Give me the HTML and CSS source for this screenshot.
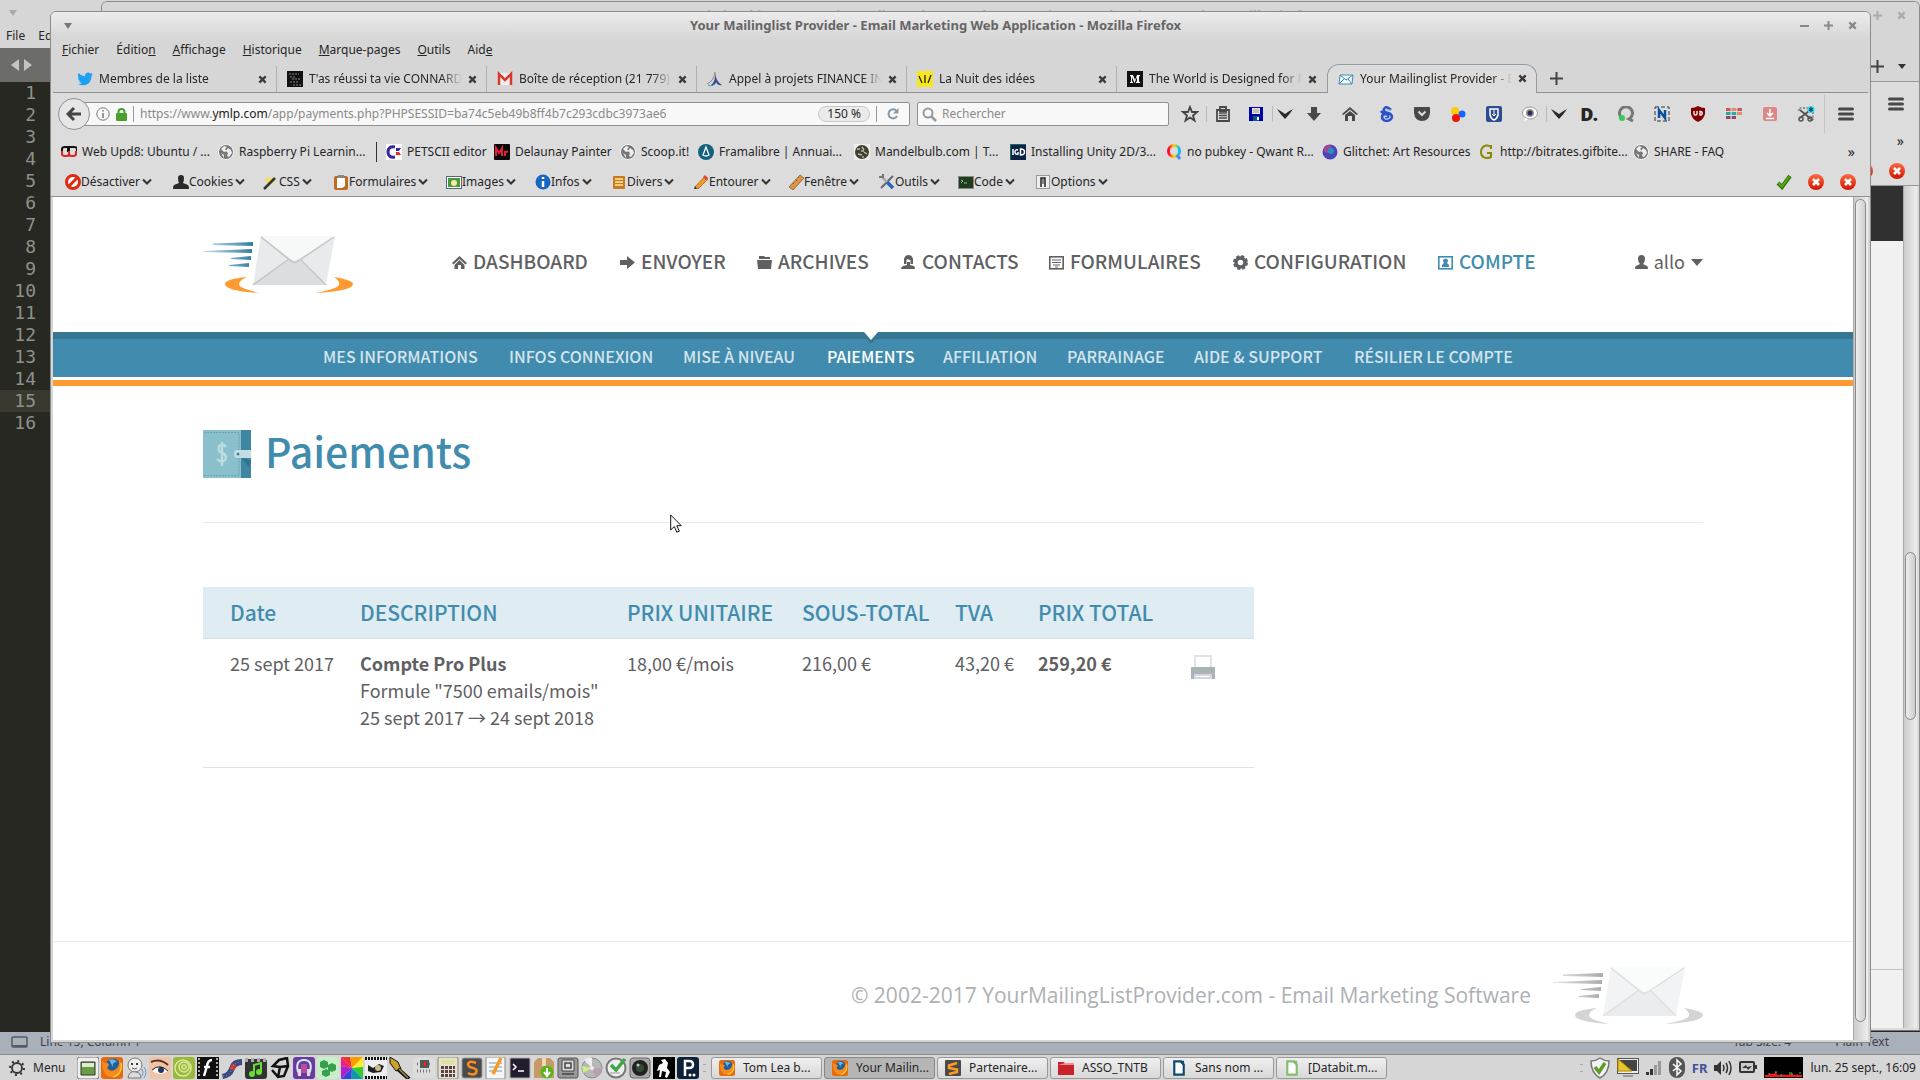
FILE: index.html
```html
<!DOCTYPE html>
<html lang="fr">
<head>
<meta charset="utf-8">
<title>Your Mailinglist Provider - Email Marketing Web Application</title>
<link rel="stylesheet" href="styles.css">
</head>
<body>
<svg class="defs" aria-hidden="true">
  <defs>
    <linearGradient id="fadeBlue"><stop offset="0" stop-color="#418cae" stop-opacity=".3"/><stop offset="1" stop-color="#337c9f"/></linearGradient>
    <linearGradient id="fadeGray"><stop offset="0" stop-color="#aaa" stop-opacity=".3"/><stop offset="1" stop-color="#aaa"/></linearGradient>
    <linearGradient id="redBall" x2="0" y2="1"><stop offset="0" stop-color="#ff6a45"/><stop offset="1" stop-color="#cf1500"/></linearGradient>
    <linearGradient id="wheel"><stop offset="0" stop-color="#f03"/><stop offset=".5" stop-color="#fd0"/><stop offset="1" stop-color="#0bf"/></linearGradient>
  </defs>
  <symbol id="x" viewBox="0 0 10 10"><path d="M1.500 1.500l7 7M8.500 1.500l-7 7" stroke="currentColor" stroke-width="2.600" fill="none"/></symbol>
  <symbol id="chev" viewBox="0 0 10 8"><path d="M1 1.500l4 4 4-4" stroke="#333" stroke-width="2" fill="none"/></symbol>
  <symbol id="bigchev" viewBox="0 0 18 12"><path d="M1 1q4 2 8 5 4-3 8-5-3 5-8 10Q4 6 1 1z" fill="#2b2b2b"/></symbol>
  <symbol id="globe" viewBox="0 0 16 16"><circle cx="8" cy="8" r="7.500" fill="#777" stroke="#f5f5f5"/><path d="M3 5l3-3 3 1-2 2 2 2-3 1zM10 4l3 2 1 3-3 4-2-1 1-3-2-2zM3 9l3 2v3z" fill="#eee"/></symbol>
  <symbol id="stop" viewBox="0 0 16 16"><circle cx="8" cy="8" r="8" fill="url(#redBall)"/><path d="M5 5l6 6M11 5l-6 6" stroke="#fff" stroke-width="2.600"/></symbol>
  <symbol id="fox" viewBox="0 0 22 22"><rect width="22" height="22" rx="3" fill="#e86a10"/><circle cx="12" cy="9" r="7.500" fill="#245c9c"/><path d="M8 3q5-2 8 2-5 0-4 5z" fill="#60b8e8"/><path d="M1 3q1 3 3 3 3-1 4 2l-2 3q4 5 9 1 4-3 3-9 4 4 2 10-3 7-10 7Q1 19 1 3z" fill="#f58b1c"/><path d="M20 6q2 11-8 14" stroke="#fc3" stroke-width="1.500" fill="none"/></symbol>
  <symbol id="burger" viewBox="0 0 16 14"><path d="M1.500 2h13M1.500 7h13M1.500 12h13" stroke="#484848" stroke-width="3" stroke-linecap="round"/></symbol>
  <symbol id="doc" viewBox="0 0 16 22"><path d="M1.500 2h9l4 4v14h-13z" fill="#fff" stroke="currentColor" stroke-width="3"/><path d="M8 1h7v8z" fill="currentColor"/></symbol>
  <symbol id="mail" viewBox="0 0 150 58">
    <path d="M58 1H132L123 50H50z" fill="#e9eaec"/><path d="M58 1H132L92 27z" fill="#f7f8f8"/><path d="M50 50L88 24Q91 28 95 24L123 50z" fill="#dcdddf"/>
    <path d="M58 2l30 24q3 3 7 0l36-24M50 50l36-26M123 50L97 24" stroke="#c4c5c7" stroke-width="1.500" fill="none"/>
  </symbol>
  <symbol id="arcs" viewBox="0 0 150 58"><path d="M44 42Q22 44 22 49q0 7 35 9-19-4-21-8 0-5 8-8zM131 42q19 3 19 7 0 7-38 9 22-4 24-8 1-4-5-8z"/></symbol>
</svg>

<div class="desktop">
  <section class="editor" aria-label="Sublime Text">
    <header class="editor-title"><svg width="10" height="7"><path d="M1 1h8L5 7z" fill="#aaa"/></svg></header>
    <nav class="editor-menu"><span>File</span><span>Edit</span></nav>
    <div class="editor-tabs"><svg width="21" height="12"><path d="M8 0v12L0 6zM13 0v12l8-6z" fill="#c4c4c4"/></svg></div>
    <ol class="gutter"><li>1</li><li>2</li><li>3</li><li>4</li><li>5</li><li>6</li><li>7</li><li>8</li><li>9</li><li>10</li><li>11</li><li>12</li><li>13</li><li>14</li><li class="current">15</li><li>16</li></ol>
    <footer class="editor-status"><svg width="17" height="12"><rect x="1" y="1" width="15" height="10" rx="1" fill="none" stroke="#555b66" stroke-width="1.500"/><path d="M1 9h15v2H1z" fill="#555b66"/></svg><span>Line 15, Column 1</span><span class="tabsize">Tab Size: 4</span><span>Plain Text</span></footer>
  </section>

  <section class="window back" aria-label="Mozilla Firefox">
    <header class="back-title"><svg width="10" height="7"><path d="M1 1h8L5 7z" fill="#aaa"/></svg><h2>Tom Lea b2b Tobi Actress Radar Radio, 19th September 2017 - by Annual Active Records - Mozilla Firefox</h2><span class="back-controls"><svg width="9" height="9"><path d="M0 4.500h9M4.500 0v9" stroke="#aaa" stroke-width="2"/></svg><svg width="9" height="9" color="#aaa"><use href="#x"/></svg></span></header>
    <div class="back-side">
      <div class="back-tabs"><svg width="13" height="13"><path d="M0 6.500h13M6.500 0v13" stroke="#444" stroke-width="2"/></svg><svg width="8" height="5"><path d="M0 0h8L4 5z" fill="#333"/></svg></div>
      <div class="back-tools"><svg width="16" height="14"><use href="#burger"/></svg></div>
      <div class="back-marks">»</div>
      <div class="back-dev"><svg width="16" height="16"><use href="#stop"/></svg><svg width="16" height="16"><use href="#stop"/></svg></div>
      <div class="back-page"><div class="back-content"><div class="dark"></div><div class="foot"></div></div><div class="back-scroll"><i></i></div></div>
    </div>
  </section>

  <section class="window front" aria-label="Your Mailinglist Provider">
    <header class="title"><svg width="10" height="7"><path d="M1 1h8L5 7z" fill="#777"/></svg><h1>Your Mailinglist Provider - Email Marketing Web Application - Mozilla Firefox</h1>
      <span class="controls"><button aria-label="Réduire"><svg width="9" height="9"><path d="M0 5h9" stroke="#888" stroke-width="2"/></svg></button><button aria-label="Agrandir"><svg width="9" height="9"><path d="M0 4.500h9M4.500 0v9" stroke="#888" stroke-width="2"/></svg></button><button aria-label="Fermer"><svg width="9" height="9" color="#888"><use href="#x"/></svg></button></span></header>
    <nav class="menubar"><a href="#"><u>F</u>ichier</a><a href="#">Éditio<u>n</u></a><a href="#"><u>A</u>ffichage</a><a href="#"><u>H</u>istorique</a><a href="#"><u>M</u>arque-pages</a><a href="#"><u>O</u>utils</a><a href="#">Aid<u>e</u></a></nav>

    <div class="tabs">
      <div class="tab"><svg width="16" height="16" viewBox="0 0 16 16"><path d="M1 13q3 0 4-1-2 0-3-2h1Q1 9 1 6.500l1 .4Q0 5 1.500 2 4 5 8 5.500 7.500 2 11 1.500q1.500 0 2.500 1l1.800-.7-1 1.700 1.700-.3-1.500 1.800Q14.500 12 8.500 14 4.500 15 1 13z" fill="#1da1f2"/></svg><span>Membres de la liste</span><button aria-label="Fermer l'onglet"><svg width="9" height="9"><use href="#x"/></svg></button></div>
      <div class="tab"><svg width="16" height="16"><rect width="16" height="16" fill="#111"/><path d="M2 3h10M3 6h6M5 8h8M3 11h9M6 14h8" stroke="#888" stroke-dasharray="2 1"/></svg><span>T'as réussi ta vie CONNARD - Page</span><button aria-label="Fermer l'onglet"><svg width="9" height="9"><use href="#x"/></svg></button></div>
      <div class="tab"><svg width="16" height="16"><rect x="1" y="2" width="14" height="12" fill="#eee"/><path d="M2 14V3l6 6 6-6v11" stroke="#d8392b" stroke-width="2.500" fill="none"/></svg><span>Boîte de réception (21 779) - all</span><button aria-label="Fermer l'onglet"><svg width="9" height="9"><use href="#x"/></svg></button></div>
      <div class="tab"><svg width="16" height="16"><path d="M8 1q-1 9-8 12" stroke="#888" fill="none"/><path d="M8 1q1 10 7 13-4 1-6-3-1 4-5 3Q9 10 8 1z" fill="#3d4890"/><path d="M1 14q5 2 6-1" stroke="#2ab" fill="none"/></svg><span>Appel à projets FINANCE INNOV</span><button aria-label="Fermer l'onglet"><svg width="9" height="9"><use href="#x"/></svg></button></div>
      <div class="tab"><svg width="16" height="16"><rect width="16" height="16" fill="#f8e71c"/><path d="M2 5l3 7M8 4v8M14 4l-3 8" stroke="#222" stroke-width="1.300"/></svg><span>La Nuit des idées</span><button aria-label="Fermer l'onglet"><svg width="9" height="9"><use href="#x"/></svg></button></div>
      <div class="tab last"><svg width="16" height="16"><rect width="16" height="16" fill="#111"/><path d="M3 4h3l2 5 2-5h3v1l-1 .5v5l1 .5v1H9v-1l1-.5V6L7.500 12 5 6v4.500l1 .5v1H3v-1l1-.5v-5L3 5z" fill="#fff"/></svg><span>The World is Designed for Men</span><button aria-label="Fermer l'onglet"><svg width="9" height="9"><use href="#x"/></svg></button></div>
      <div class="tab active"><svg width="16" height="16"><path d="M2 4h13l-1 9H1z" fill="#eef6fa" stroke="#418cae"/><path d="M2 4l6 5 7-5M1 13l5-5M14 13L10 8" stroke="#418cae" fill="none"/></svg><span>Your Mailinglist Provider - Email</span><button aria-label="Fermer l'onglet"><svg width="9" height="9"><use href="#x"/></svg></button></div>
      <button class="newtab" aria-label="Nouvel onglet"><svg width="13" height="13"><path d="M0 6.500h13M6.500 0v13" stroke="#444" stroke-width="2"/></svg></button>
    </div>

    <div class="toolbar">
      <button class="backbtn" aria-label="Retour"><svg width="16" height="16"><path d="M8 2L2 8l6 6M2.500 8H15" stroke="#444" stroke-width="3" fill="none"/></svg></button>
      <div class="url"><svg width="14" height="14"><circle cx="7" cy="7" r="6.200" fill="none" stroke="#777"/><path d="M7 3v1.500M7 6v5" stroke="#777" stroke-width="1.500"/></svg><svg width="11" height="13"><rect y="5" width="11" height="8" rx="1" fill="#499f2a"/><path d="M2.500 6V4a3 3 0 016 0v2" stroke="#499f2a" stroke-width="2" fill="none"/></svg><i class="bar"></i><div class="address" role="textbox" aria-label="Adresse" contenteditable="true" spellcheck="false">https://www.<b>ymlp.com</b>/app/payments.php?PHPSESSID=ba74c5eb49b8ff4b7c293cdbc3973ae6</div><button class="zoom">150 %</button><i class="bar"></i><button class="reload" aria-label="Actualiser"><svg width="12" height="12"><path d="M10 8a4.500 4.500 0 11-.5-5" stroke="#8a98a5" stroke-width="2" fill="none"/><path d="M11.500 0v5.500H6z" fill="#8a98a5"/></svg></button></div>
      <label class="search"><svg width="15" height="15"><circle cx="6" cy="6" r="4.500" fill="none" stroke="#999" stroke-width="2"/><path d="M9 9l5 5" stroke="#999" stroke-width="2.500"/></svg><input type="search" placeholder="Rechercher" aria-label="Rechercher"></label>
      <div class="tools">
        <button aria-label="Marquer"><svg width="18" height="18"><path d="M9 2l2 5h5l-4 3.500 1.500 5L9 12.500l-4.500 3 1.500-5L2 7h5z" fill="none" stroke="#444" stroke-width="1.800"/></svg></button>
        <button class="ruled" aria-label="Marque-pages"><svg width="16" height="16"><path d="M2 4h12v11H2zM5 1h6v4H5z" fill="none" stroke="#484848" stroke-width="1.800"/><path d="M4 7h8M4 9.500h8M4 12h8" stroke="#484848" stroke-width="1.300"/></svg></button>
        <button aria-label="Enregistrer"><svg width="14" height="14"><path d="M0 0h14v14H0z" fill="#0000a8"/><path d="M3 1h8v6H3z" fill="#e6e6e6"/><path d="M4 3h6M4 5h6" stroke="#999"/><path d="M4 9h6v5H4z" fill="#085a85"/><path d="M8 10h2v3H8z" fill="#fff"/></svg></button>
        <button class="ruled slim" aria-label="Plus"><svg width="18" height="12"><use href="#bigchev"/></svg></button>
        <button aria-label="Téléchargements"><svg width="16" height="16"><path d="M5 1h6v6h4l-7 8-7-8h4z" fill="#484848"/></svg></button>
        <button aria-label="Accueil"><svg width="16" height="16"><path d="M0 8l8-7 8 7-1.500 1L8 3.500 1.500 9z" fill="#484848"/><path d="M3 9l5-4 5 4v6h-3v-5H6v5H3z" fill="#484848"/></svg></button>
        <button aria-label="Extension"><svg width="16" height="16"><path d="M13 4Q8-1 6 3q-1 3 4 4M3 5q2 3 7 2 4 1 4 4-1 4-6 4-4-1-4-4t4-3q3 1 2 3-2 1-2 0" stroke="#2e50c8" stroke-width="2.500" fill="none"/><path d="M7 3q3 2 6 1M6 12q2 2 5 0" stroke="#8ac4f0" fill="none"/></svg></button>
        <button aria-label="Pocket"><svg width="16" height="16"><path d="M1 1h14q1 0 1 1v5q-1 8-8 8T0 7V2q0-1 1-1z" fill="#484848"/><path d="M4.500 5.500L8 9l3.500-3.500" stroke="#ddd" stroke-width="2" fill="none"/></svg></button>
        <button aria-label="Extension"><svg width="16" height="16"><circle cx="5" cy="5" r="4" fill="#fc0"/><circle cx="12" cy="8" r="3.500" fill="#16f"/><circle cx="6" cy="12" r="4" fill="#f21505"/></svg></button>
        <button aria-label="Extension"><svg width="16" height="16"><rect width="16" height="16" rx="2" fill="#2c4e91"/><path d="M4 3h8v6q-1 4-4 5-3-1-4-5z" fill="none" stroke="#fff" stroke-width="1.500"/><path d="M8 4v6M6 8l2 2 2-2" stroke="#fff" fill="none"/></svg></button>
        <button aria-label="Extension"><svg width="16" height="16"><ellipse cx="8" cy="7" rx="7.500" ry="6" fill="#fff" stroke="#999"/><path d="M3 12l-1 3 5-2z" fill="#fff"/><circle cx="8" cy="7" r="4" fill="#a79090"/><circle cx="8" cy="7" r="2.500" fill="#223366"/></svg></button>
        <button class="ruled slim" aria-label="Plus"><svg width="18" height="12"><use href="#bigchev"/></svg></button>
        <button class="dee" aria-label="Extension">D.</button>
        <button aria-label="Extension"><svg width="16" height="16"><path d="M5 13a6.500 6.500 0 116 0l4 2" fill="none" stroke="#777" stroke-width="3"/><circle cx="4" cy="12" r="3" fill="#3c5"/></svg></button>
        <button aria-label="Extension"><svg width="16" height="16"><rect x="1" y="1" width="14" height="14" fill="none" stroke="#333" stroke-dasharray="4 2"/><path d="M5 12V4l6 8V4" stroke="#0a4fa0" stroke-width="2.500" fill="none"/></svg></button>
        <button aria-label="uBlock"><svg width="16" height="16"><path d="M8 0q3 2 7 2v6q-1 5-7 8-6-3-7-8V2q4 0 7-2z" fill="#800000"/><path d="M4 5v3q0 1 1.500 1T7 8V5M10 5.500a1.800 1.800 0 110 3.500z" stroke="#fff" stroke-width="1.300" fill="none"/></svg></button>
        <button aria-label="Extension"><svg width="16" height="12"><path d="M0 1.500h16" stroke="#c55" stroke-width="3" stroke-dasharray="4.500 1.200"/><path d="M0 5.500h16" stroke="#2aa9a0" stroke-width="3" stroke-dasharray="4.500 1.200"/><path d="M0 9.500h10" stroke="#946" stroke-width="3" stroke-dasharray="4.500 1.200"/><path d="M11.500 5.500H16M6 1.500h4" stroke="#e58a63" stroke-width="3"/></svg></button>
        <button aria-label="Extension"><svg width="14" height="14"><rect width="14" height="14" rx="2" fill="#d88"/><path d="M7 2v6M4 6l3 3 3-3M3 11.500h8" stroke="#fff" stroke-width="1.500" fill="none"/></svg></button>
        <button aria-label="Capture"><svg width="17" height="16"><path d="M1 5V2h14v12h-3" stroke="#444" stroke-dasharray="2 1.500" fill="none"/><path d="M2 4l11 9M2 12l9-7" stroke="#555" stroke-width="1.800"/><circle cx="3" cy="13" r="2" fill="none" stroke="#555" stroke-width="1.500"/><circle cx="12" cy="13" r="2" fill="none" stroke="#555" stroke-width="1.500"/><circle cx="13" cy="3.500" r="3.500" fill="#1de0f0"/><path d="M13 1v5M11 2.500l4 2M15 2.500l-4 2" stroke="#124"/></svg></button>
      </div>
      <button class="menu" aria-label="Menu"><svg width="16" height="14"><use href="#burger"/></svg></button>
    </div>

    <nav class="bookmarks">
      <a href="#"><svg width="16" height="16"><path d="M1 8V5q0-2 3-2h3v5M8 8V3h5q3 0 3 2v3" stroke="#111" stroke-width="2" fill="none"/><path d="M1 7v3q0 2 3 2h1q3 0 3-2V7v3q0 2 3 2h1q3 0 3-2V7" stroke="#d22" stroke-width="2" fill="none"/></svg>Web Upd8: Ubuntu / ...</a>
      <a href="#"><svg width="16" height="16"><use href="#globe"/></svg>Raspberry Pi Learnin...</a>
      <a href="#" class="ruled"><svg width="16" height="16"><rect width="16" height="16" fill="#fff"/><path d="M9 3Q2 2 2 8t7 5" stroke="#3524a8" stroke-width="3" fill="none"/><path d="M10 4h5l-2 3h-3z" fill="#3524a8"/><path d="M10 8h3l2 3h-5z" fill="#e22"/></svg>PETSCII editor</a>
      <a href="#"><svg width="16" height="16"><rect width="16" height="16" rx="1" fill="#080808"/><path d="M2 12V4l3 5 3-5v8M11 12V7M11 9q1-2 3-1" stroke="#e0203c" stroke-width="2" fill="none"/></svg>Delaunay Painter</a>
      <a href="#"><svg width="16" height="16"><use href="#globe"/></svg>Scoop.it!</a>
      <a href="#"><svg width="16" height="16"><circle cx="8" cy="8" r="8" fill="#13607f"/><path d="M8 3l-3 8q3 2 6 0z" fill="none" stroke="#fff" stroke-width="1.300"/></svg>Framalibre | Annuai...</a>
      <a href="#"><svg width="16" height="16"><rect width="16" height="16" fill="#eee"/><circle cx="8" cy="8" r="7" fill="#443f33"/><path d="M3 5h3M8 3l2 3M4 10l4 1M10 8l3 2M7 7h3M8 13h2" stroke="#bba" stroke-width="1.500"/></svg>Mandelbulb.com | T...</a>
      <a href="#"><svg width="16" height="16"><rect width="16" height="16" fill="#0c2348"/><path d="M0 0h16M0 0v16" stroke="#2a8"/><path d="M3 5v6M8 6q-3-1-3 2t3 2V8M10.500 5v6q4 0 4-3t-4-3z" stroke="#fff" stroke-width="1.500" fill="none"/></svg>Installing Unity 2D/3...</a>
      <a href="#"><svg width="16" height="16"><circle cx="8" cy="7" r="5.500" stroke="url(#wheel)" stroke-width="3" fill="none"/><path d="M11 11l3 4" stroke="#58e" stroke-width="3"/></svg>no pubkey - Qwant R...</a>
      <a href="#"><svg width="16" height="16"><circle cx="8" cy="8" r="7.500" fill="#4a45b8"/><circle cx="6" cy="5" r="4" fill="#a04898"/><circle cx="9" cy="7" r="3" fill="#2790c0"/></svg>Glitchet: Art Resources</a>
      <a href="#"><svg width="16" height="16"><path d="M12 3Q10 1 7 1.500 2 3 2 8t5 6q4 0 5-1V9H8M12 1v4" stroke="#8a8a00" stroke-width="2" fill="none"/></svg>http://bitrates.gifbite...</a>
      <a href="#"><svg width="16" height="16"><use href="#globe"/></svg>SHARE - FAQ</a>
      <button class="more" aria-label="Plus de marque-pages">»</button>
    </nav>

    <div class="devbar">
      <button><svg width="16" height="16"><circle cx="8" cy="8" r="6.500" fill="#fff" stroke="#dc2b12" stroke-width="3"/><path d="M4 12l8-8" stroke="#dc2b12" stroke-width="3"/></svg>Désactiver<svg class="c" width="10" height="8"><use href="#chev"/></svg></button>
      <button><svg width="16" height="16"><path d="M5 4q0-3 3-3t3 3-1 5l5 2q1 1 1 4H0q0-3 1-4l5-2Q5 7 5 4z" fill="#2a2a2a"/></svg>Cookies<svg class="c" width="10" height="8"><use href="#chev"/></svg></button>
      <button><svg width="16" height="16"><path d="M5 1l2 4 4-2-2 4 3 3H7l-3 3V8L1 5h4z" fill="#fd3" fill-opacity=".8"/><path d="M1 15L12 4" stroke="#333" stroke-width="2.500"/></svg>CSS<svg class="c" width="10" height="8"><use href="#chev"/></svg></button>
      <button><svg width="16" height="16"><rect x="1" y="2" width="14" height="14" rx="2" fill="#c06a26"/><path d="M4 4h8v8l-3 2H4z" fill="#fff"/><path d="M5 1h6v3H5z" fill="#888"/></svg>Formulaires<svg class="c" width="10" height="8"><use href="#chev"/></svg></button>
      <button><svg width="16" height="16"><rect x=".5" y="2.500" width="15" height="12" fill="#fff" stroke="#567"/><path d="M2 4h12v9H2z" fill="#4a9a3c"/><circle cx="8" cy="9" r="3" fill="#f5e9b0"/></svg>Images<svg class="c" width="10" height="8"><use href="#chev"/></svg></button>
      <button><svg width="16" height="16"><circle cx="8" cy="8" r="7.500" fill="#1767c0"/><path d="M8 3v2M8 7v6" stroke="#fff" stroke-width="2.500"/></svg>Infos<svg class="c" width="10" height="8"><use href="#chev"/></svg></button>
      <button><svg width="16" height="16"><rect x="2" y="2" width="12" height="13" rx="1" fill="#c77a22"/><path d="M4 5h8M4 8h8M4 11h8" stroke="#f6cf7a" stroke-width="1.800"/></svg>Divers<svg class="c" width="10" height="8"><use href="#chev"/></svg></button>
      <button><svg width="16" height="16"><path d="M2 13L12 2l3 3L5 15z" fill="#f39a2b" stroke="#9a5410" stroke-width=".7"/><path d="M12 1l3 3-2 2-3-3z" fill="#d44"/><path d="M1 15l1-3 2 3z" fill="#333"/></svg>Entourer<svg class="c" width="10" height="8"><use href="#chev"/></svg></button>
      <button><svg width="16" height="16"><path d="M1 13L12 1l4 3L5 16z" fill="#d8954e" stroke="#8f5b21" stroke-width=".8"/><path d="M5 9l1 1M8 6l1 1M10 3l1 1" stroke="#8f5b21"/></svg>Fenêtre<svg class="c" width="10" height="8"><use href="#chev"/></svg></button>
      <button><svg width="16" height="16"><path d="M2 14L14 2" stroke="#667" stroke-width="2"/><path d="M2 2l7 7" stroke="#aaa" stroke-width="2.500"/><path d="M8 8l6 6" stroke="#2464c0" stroke-width="3.500"/><path d="M0 3h4V0" stroke="#777" stroke-width="2" fill="none"/></svg>Outils<svg class="c" width="10" height="8"><use href="#chev"/></svg></button>
      <button><svg width="16" height="16"><rect x=".5" y="2.500" width="15" height="12" fill="#223a20" stroke="#888"/><path d="M3 6l2 1-2 2M6 9h3" stroke="#7d7" fill="none"/></svg>Code<svg class="c" width="10" height="8"><use href="#chev"/></svg></button>
      <button><svg width="16" height="16"><rect x="1.500" y="1.500" width="13" height="13" fill="#eee" stroke="#999"/><path d="M6 13V4h4v9" stroke="#222" stroke-width="1.500" fill="none"/><path d="M7.500 5h1v5h-1z" fill="#222"/></svg>Options<svg class="c" width="10" height="8"><use href="#chev"/></svg></button>
      <span class="state"><svg width="16" height="16"><path d="M2 9l4 4 8-11" stroke="#2f6f08" stroke-width="4" fill="none"/><path d="M2.500 9L6 12.500 13.500 2.500" stroke="#5cab12" stroke-width="2" fill="none"/></svg><svg width="16" height="16"><use href="#stop"/></svg><svg width="16" height="16"><use href="#stop"/></svg></span>
    </div>

    <div class="viewport">
      <div class="page">
        <header class="site-head">
          <a href="#" class="logo" aria-label="YMLP"><svg width="150" height="58"><g fill="url(#fadeBlue)"><path d="M10 8.500L50 7v4l-40-1zM0 16l49-2v4l-49-1zM28 23l20-2v4l-20-1zM26 30l20-2v4l-20-1z"/></g><use href="#arcs" fill="#ff9a33"/><use href="#mail"/></svg></a>
          <nav class="mainnav">
            <a href="#"><svg width="15" height="15"><path d="M0 8l7.500-7L15 8l-1.500 1.500-6-5.500-6 5.500z"/><path d="M2.500 10l5-5 5 5v4H9v-4H6v4H2.500z"/></svg>DASHBOARD</a>
            <a href="#"><svg width="15" height="15"><path d="M0 5h7V1l8 6.500L7 14v-4H0z"/></svg>ENVOYER</a>
            <a href="#"><svg width="15" height="15"><path d="M2 4V1h5l1 1h5v2zM0 5h15l-1 9H1z"/></svg>ARCHIVES</a>
            <a href="#"><svg width="15" height="15"><path d="M3 9V4q1-4 4.500-4T12 4v5H9.500V5q-2 0-3-1l-1 1v4zM6 7h3v3l4 1q1 1 1 3H0q0-2 2-3l4-1z"/></svg>CONTACTS</a>
            <a href="#"><svg width="15" height="15"><rect x=".8" y="1.800" width="13.400" height="12" fill="none" stroke="currentColor" stroke-width="1.600"/><path d="M3 5h9M3 7.500h9M4 10h7M6 12h3" stroke="currentColor"/></svg>FORMULAIRES</a>
            <a href="#"><svg width="15" height="15"><circle cx="7.500" cy="7.500" r="4.500" fill="none" stroke="currentColor" stroke-width="3.500"/><circle cx="7.500" cy="7.500" r="6.500" fill="none" stroke="currentColor" stroke-width="2" stroke-dasharray="3.100 2"/></svg>CONFIGURATION</a>
            <a href="#" class="on"><svg width="15" height="15"><rect x=".8" y="1.800" width="13.400" height="12" fill="none" stroke="currentColor" stroke-width="1.600"/><path d="M5 5q2.500-3 5 0 0 2-1 3l2 2v2H4v-2l2-2q-1-1-1-3z"/></svg>COMPTE</a>
          </nav>
          <button class="user"><svg width="13" height="15"><path d="M3 4q0-4 3.500-4T10 4q0 3-2 5l4 2q1 0 1 3H0q0-3 1-3l4-2Q3 7 3 4z"/></svg>allo<svg width="12" height="7"><path d="M0 0h12L6 7z"/></svg></button>
        </header>
        <nav class="subnav"><a href="#">MES INFORMATIONS</a><a href="#">INFOS CONNEXION</a><a href="#">MISE À NIVEAU</a><a href="#" class="on">PAIEMENTS</a><a href="#">AFFILIATION</a><a href="#">PARRAINAGE</a><a href="#">AIDE &amp; SUPPORT</a><a href="#">RÉSILIER LE COMPTE</a></nav>
        <div class="rule"></div>
        <main>
          <div class="heading"><svg width="48" height="48"><rect width="48" height="48" fill="#8abfcc"/><path d="M38 0h10v48H38z" fill="#3e86a1"/><path d="M1 2.500h35v43H1" stroke="#6aa2b2" stroke-dasharray="2 1" fill="none"/><path d="M23 17q-3-4-7-1-2 5 3 7 6 2 3 7-4 3-8-1M19 12v24" stroke="#bddde2" stroke-width="2.400" fill="none"/><path d="M48 31l-10-4 8 10z" fill="#2d7490"/><path d="M34 20h14v8H34q-3 0-3-4t3-4z" fill="#c2dee3"/><circle cx="35" cy="24" r="1.500" fill="#3e86a1"/></svg><h2>Paiements</h2></div>
          <table>
            <colgroup><col class="c1"><col class="c2"><col class="c3"><col class="c4"><col class="c5"><col class="c6"><col></colgroup>
            <thead><tr><th>Date</th><th>DESCRIPTION</th><th>PRIX UNITAIRE</th><th>SOUS-TOTAL</th><th>TVA</th><th>PRIX TOTAL</th><td></td></tr></thead>
            <tbody><tr><td>25 sept 2017</td><td><strong>Compte Pro Plus</strong><br>Formule "7500 emails/mois"<br>25 sept 2017 → 24 sept 2018</td><td>18,00 €/mois</td><td>216,00 €</td><td>43,20 €</td><td><strong>259,20 €</strong></td><td><button class="print" aria-label="Imprimer"><svg width="24" height="24"><path d="M4 1h16v14H4z" fill="#fff" stroke="#e2e1e8" stroke-width="2"/><path d="M0 12h24v12H0z" fill="#aab4b7"/><path d="M4 20h16v3H4z" fill="#fff" stroke="#d5d7e0" stroke-width="2"/><path d="M20 15h1v1h-1z" fill="#3cb878"/></svg></button></td></tr></tbody>
          </table>
        </main>
        <footer class="site-foot"><span>© 2002-2017 YourMailingListProvider.com - Email Marketing Software</span><svg width="150" height="58"><g fill="url(#fadeGray)"><path d="M10 8.500L50 7v4l-40-1zM0 16l49-2v4l-49-1zM28 23l20-2v4l-20-1zM26 30l20-2v4l-20-1z"/></g><use href="#arcs" fill="#d4d4d4"/><use href="#mail" opacity=".55"/></svg></footer>
      </div>
      <div class="scroll"><i></i></div>
    </div>
  </section>
  <svg class="cursor" width="12" height="19"><path d="M.7 1v15l3.600-3.500 2.500 5.700 2.500-1-2.500-5.500h4.500z" fill="#fff" stroke="#111"/></svg>
</div>

<footer class="taskbar">
  <button class="start"><svg width="18" height="18"><circle cx="9" cy="9" r="5" fill="none" stroke="#333" stroke-width="1.800"/><circle cx="9" cy="9" r="7" fill="none" stroke="#333" stroke-width="2" stroke-dasharray="2 3.500"/></svg>Menu</button>
  <div class="launch">
    <svg viewBox="0 0 22 22"><rect width="22" height="22" rx="3" fill="#eee" stroke="#777"/><path d="M4 5h14v13H4z" fill="#6a9b45" stroke="#2f3a2a"/><path d="M5 6h12v4H5z" fill="#dfe9d5"/></svg>
    <svg viewBox="0 0 22 22"><use href="#fox"/></svg>
    <svg viewBox="0 0 22 22"><circle cx="10" cy="8" r="7" fill="#eee" stroke="#777"/><path d="M3 21q1-8 8-6 5 1 5 6z" fill="#ddd" stroke="#777"/><circle cx="7" cy="7" r="1"/><circle cx="12" cy="7" r="1"/><path d="M7 11q3 2 5 0" stroke="#555" fill="none"/><path d="M17 12q2 3 0 7M19 10q4 5 0 11" stroke="#69c" fill="none"/></svg>
    <svg viewBox="0 0 22 22"><rect width="22" height="22" rx="3" fill="#f0c3a6"/><path d="M2 5q9-4 17 3" stroke="#532" stroke-width="2" fill="none"/><path d="M3 14q8-8 16 0-8 6-16 0z" fill="#fff"/><circle cx="12" cy="13" r="3" fill="#236"/><path d="M3 13q8-7 16 1" stroke="#222" fill="none"/></svg>
    <svg viewBox="0 0 22 22"><rect width="22" height="22" rx="3" fill="#9ab83c"/><g fill="none" stroke="#dcea9c" stroke-width="1.500"><circle cx="11" cy="10" r="2"/><circle cx="11" cy="10" r="5"/><circle cx="10" cy="11" r="8"/></g></svg>
    <svg viewBox="0 0 22 22"><rect width="22" height="22" fill="#111"/><path d="M2 1v20M20 1v20" stroke="#aaa" stroke-width="2" stroke-dasharray="2 2"/><path d="M15 3q-4 0-5 6L7 19M7 10h6" stroke="#fff" stroke-width="2.500" fill="none"/></svg>
    <svg viewBox="0 0 22 22"><path d="M1 17q6-1 8-8t12-7v6q-6 0-8 6T2 22z" fill="#37477e"/><path d="M8 11l4-5 4 3-4 5z" fill="#c43c36"/><path d="M2 19q7 0 9-8 3-6 9-6" stroke="#9ac" stroke-dasharray="1 2" fill="none"/></svg>
    <svg viewBox="0 0 22 22"><rect y="2" width="22" height="20" rx="3" fill="#333"/><path d="M0 3h22" stroke="#aaa" stroke-width="4" stroke-dasharray="3 3"/><path d="M9 16V8l7-2v8" stroke="#6d3" stroke-width="2" fill="none"/><circle cx="7" cy="17" r="3" fill="#6d3"/><circle cx="14" cy="15" r="3" fill="#6d3"/></svg>
    <svg viewBox="0 0 22 22"><path d="M11 10l-7-1 6-6 8-2 1 8-4 10-6 1-6-7M11 10l8-1M11 10l-2 10" fill="none" stroke="#111" stroke-width="2.500"/></svg>
    <svg viewBox="0 0 22 22"><rect width="22" height="22" rx="3" fill="#6a3aa0"/><path d="M5 15q-3-12 6-12t6 12" stroke="#cef" stroke-width="2" fill="none"/><path d="M4 12h4v7H5zM14 12h4l-1 7h-3z" fill="#ddd"/><path d="M8 7h6v9H8z" fill="#e75b9a" opacity=".6"/></svg>
    <svg viewBox="0 0 22 22"><rect width="22" height="22" rx="3" fill="#c8efc8"/><path d="M7 3l4 2v5l-4 2-4-2V5zM15 6l4 2v5l-4 2-4-2V8zM9 12l4 2v4l-4 2-4-2v-4z" fill="#35a24b"/></svg>
    <svg viewBox="0 0 22 22"><path d="M11 11L0 0h9z" fill="#e33"/><path d="M11 11L9 0h13z" fill="#f90"/><path d="M11 11L22 0v10z" fill="#fe2"/><path d="M11 11l11-1v12z" fill="#3c3"/><path d="M11 11l11 11H10z" fill="#19a"/><path d="M11 11l-1 11H0z" fill="#34d"/><path d="M11 11L0 22V9z" fill="#a2c"/><path d="M11 11L0 9V0z" fill="#e27"/></svg>
    <svg viewBox="0 0 22 22"><rect width="22" height="22" fill="#eee"/><path d="M0 1.500h22M0 20.500h22" stroke="#111" stroke-width="3" stroke-dasharray="2 1"/><path d="M3 8l5 3 6-4 5 2-3 6-8 1-5-2z" fill="#222"/><circle cx="13" cy="11" r="3" fill="#cb8"/></svg>
    <svg viewBox="0 0 22 22"><path d="M1 0l8 5 3 7-5 2L1 6z" fill="#c9a227" stroke="#111"/><path d="M9 12l11 10" stroke="#111" stroke-width="4"/><path d="M10 12l9 9" stroke="#a84" stroke-width="1.500"/></svg>
    <svg viewBox="0 0 22 22"><rect y="1" width="22" height="20" rx="2" fill="#ddd"/><path d="M4 7h14M4 14h14" stroke="#777" stroke-width="3" stroke-dasharray="1 2"/><path d="M7 3h9v8H7z" fill="#555"/><path d="M11 5h2v4h-2z" fill="#e22"/></svg>
    <svg viewBox="0 0 22 22"><rect x="1" width="20" height="22" rx="2" fill="#e7dfd0" stroke="#887"/><path d="M4 3h14v4H4z" fill="#d9e59c"/><path d="M4 10.500h14M4 14.500h14M4 18.500h14" stroke="#544" stroke-width="3" stroke-dasharray="3 1"/></svg>
    <svg viewBox="0 0 22 22"><rect x="1" y="1" width="20" height="20" rx="2" fill="#4a4a4a" stroke="#999"/><path d="M15 6q-7-3-8 1 0 3 5 4t3 5q-3 3-8 0" stroke="#ff8a22" stroke-width="2.500" fill="none"/></svg>
    <svg viewBox="0 0 22 22"><rect x="1" width="19" height="22" rx="1" fill="#f6f6f6" stroke="#888"/><path d="M4 6h13M4 10h13M4 14h13" stroke="#79b"/><path d="M16 1L8 17" stroke="#f59a22" stroke-width="3.500"/></svg>
    <svg viewBox="0 0 22 22"><rect x="1" y="1" width="20" height="20" rx="1" fill="#261c30" stroke="#aaa"/><path d="M4 7l3 3-3 3M9 14h6" stroke="#fff" stroke-width="1.500" fill="none"/></svg>
    <svg viewBox="0 0 22 22"><path d="M1 5l4-4h12l4 4v16H1z" fill="#c69a66"/><path d="M9 1h4v8H9z" fill="#eddab5"/><circle cx="14" cy="15" r="6.500" fill="#58b51c"/><path d="M14 11v7M11 15l3 4 3-4" stroke="#fff" stroke-width="2" fill="none"/></svg>
    <svg viewBox="0 0 22 22"><rect x="1" y="1" width="20" height="20" rx="2" fill="#999" stroke="#555"/><path d="M5 3h12v11H5z" fill="#ddd" stroke="#444"/><path d="M8 6h6v5H8zM5 17h12" fill="none" stroke="#444" stroke-width="1.500"/></svg>
    <svg viewBox="0 0 22 22"><circle cx="11" cy="11" r="10" fill="#b8b8b8" stroke="#888"/><path d="M11 11L3 3q5-4 8-2z" fill="#eee"/><path d="M11 11h10q0 7-7 9z" fill="#b9a0b4"/><path d="M11 11L2 16 1 9z" fill="#ce8"/><circle cx="11" cy="11" r="2" fill="#eee"/></svg>
    <svg viewBox="0 0 22 22"><circle cx="11" cy="11" r="9.500" fill="#eee" stroke="#777" stroke-width="2"/><path d="M6 8l5 5L20 2" stroke="#39a845" stroke-width="3.500" fill="none"/><path d="M5 16h10" stroke="#999"/></svg>
    <svg viewBox="0 0 22 22"><rect x="1" y="1" width="20" height="20" rx="3" fill="#aaa" stroke="#666"/><circle cx="11" cy="11" r="8" fill="#222"/><circle cx="11" cy="11" r="4" fill="#354b38"/><circle cx="9" cy="8" r="1.500" fill="#bcb"/></svg>
    <svg viewBox="0 0 22 22"><rect width="24" height="22"/><path d="M8 3l4-1 3 4-1 5 3 4-3 6-2-1 1-5-4-1-1 6H6l1-7-3 1 2-6 4-2z" fill="#fff"/></svg>
    <svg viewBox="0 0 22 22"><rect width="22" height="22" rx="3" fill="#0b2138"/><path d="M8 19V4h4q4 0 4 3.500T12 11H8" stroke="#fff" stroke-width="2.500" fill="none"/><circle cx="13" cy="18" r="1.500" fill="#fff"/><circle cx="17" cy="18" r="1.500" fill="#fff"/></svg>
  </div>
  <i class="grip"></i>
  <div class="tasks">
    <button><svg width="16" height="16" viewBox="0 0 22 22"><use href="#fox"/></svg>Tom Lea b...</button>
    <button class="on"><svg width="16" height="16" viewBox="0 0 22 22"><use href="#fox"/></svg>Your Mailin...</button>
    <button><svg width="16" height="16"><rect width="16" height="16" rx="1" fill="#4a4a4a"/><path d="M12 3L4 5.500V8l8 1.500V12l-8 2" stroke="#ff9a22" stroke-width="2.500" fill="none"/></svg>Partenaire...</button>
    <button><svg width="16" height="16"><path d="M0 2h6l1 2h9v11H0z" fill="#c9222c"/><path d="M0 5h16V3H7z" fill="#f09090"/></svg>ASSO_TNTB</button>
    <button><svg width="16" height="16" color="#104a72"><use href="#doc"/></svg>Sans nom ...</button>
    <button><svg width="16" height="16" color="#83bd72"><use href="#doc"/></svg>[Databit.m...</button>
  </div>
  <div class="tray">
    <i class="grip"></i>
    <svg width="20" height="22"><path d="M10 1q4 3 9 3 0 12-9 17Q1 16 1 4q5 0 9-3z" fill="#f3f3f3" stroke="#777" stroke-width="1.500"/><path d="M5 10l4 5 6-9" stroke="#5d9a26" stroke-width="3.500" fill="none"/></svg>
    <svg width="22" height="20"><rect x=".5" y=".5" width="21" height="15" fill="#eee" stroke="#555"/><path d="M2 2h18v11H2z" fill="#444"/><path d="M1 1l14 12H1z" fill="#e9c62a" stroke="#a80"/><path d="M6 17h10v2H6z" fill="#999"/></svg>
    <svg width="16" height="16"><path d="M0 12h3v3H0z" fill="#333"/><path d="M4 9h3v6H4z" fill="#333"/><path d="M8 5h3v10H8z" fill="#999"/><path d="M12 1h3v14h-3z" fill="#999"/></svg>
    <svg width="16" height="22"><rect width="16" height="21" rx="8" fill="#555"/><path d="M4 7l8 7-4 4V3l4 4-8 7" stroke="#fff" stroke-width="1.500" fill="none"/></svg>
    <b>FR</b>
    <svg width="18" height="16"><path d="M0 5h3l4-4v14l-4-4H0z" fill="#333"/><path d="M9 5q2 3 0 6M12 3q3 5 0 10M15 1q4 7 0 14" stroke="#333" stroke-width="1.500" fill="none"/></svg>
    <svg width="18" height="13"><rect x="1" y="1" width="14" height="10" rx="1" fill="#ccc" stroke="#333" stroke-width="2"/><path d="M16 4h2v4h-2zM3 7l4-3 1 2 5-1-4 4-1-2z" fill="#333"/></svg>
    <svg width="39" height="21"><rect width="39" height="21" fill="#000"/><path d="M1 20v-2h4v-2l2 1h3l2-3 1 4h4l2-1v1h6v-1h4v1h3l2-1v1h4v2z" fill="#f12"/><path d="M5 16v2M12 14v2M17 17v2M25 16h3v2M36 15v2" stroke="#2d2" fill="none"/></svg>
    <time>lun. 25 sept., 16:09</time>
  </div>
</footer>
</body>
</html>
```
FILE: styles.css
```css
* { box-sizing: border-box; }
html, body { height: 100%; }
body { margin: 0; display: flex; flex-direction: column; overflow: hidden; font: 12px/16px "Noto Sans", "DejaVu Sans", sans-serif; color: #262626; background: #d6d6d6; }
button { font: inherit; color: inherit; background: none; border: 0; padding: 0; display: flex; align-items: center; }
a { color: inherit; text-decoration: none; white-space: nowrap; }
svg { flex: none; display: block; }
h1, h2 { margin: 0; }
.defs { position: absolute; width: 0; height: 0; }
.desktop { position: relative; flex: 1; min-height: 0; }

/* text editor behind the browsers */
.editor { position: absolute; inset: 0; display: flex; flex-direction: column; background: #272822; }
.editor-title { height: 26px; padding: 9px 8px; background: #d6d6d6; }
.editor-menu { height: 22px; display: flex; gap: 13px; padding: 2px 6px; background: #d6d6d6; }
.editor-tabs { height: 34px; padding: 11px; background: #6c6d69; }
.gutter { flex: 1; min-height: 0; margin: 0; padding: 0; list-style: none; color: #8f908a; font: 18px/22px "DejaVu Sans Mono", monospace; }
.gutter li { width: 51px; padding-right: 15px; text-align: right; }
.gutter .current { background: #3a392f; }
.editor-status { height: 23px; display: flex; align-items: center; gap: 12px; padding: 0 31px 2px 11px; background: #a9b0ba; border-bottom: 1px solid #8a8a8a; color: #3c4048; }
.tabsize { margin-left: auto; margin-right: 32px; }

/* windows */
.window { position: absolute; display: flex; flex-direction: column; background: #dcdcdc; border: 1px solid #8c8c8c; border-radius: 6px 6px 0 0; overflow: hidden; }
.back { inset: 1px 0 24px 101px; border-bottom-color: #777; }
.back-title { height: 49px; display: flex; align-items: flex-start; padding: 9px 13px 0 10px; background: #d6d6d6; color: #aaa; }
.back-title h2 { flex: 1; font-size: 13px; line-height: 16px; text-align: center; margin-top: -4px; padding-right: 28px; }
.back-controls { display: flex; gap: 15px; }
.back-side { align-self: flex-end; width: 50px; flex: 1; min-height: 0; display: flex; flex-direction: column; }
.back-tabs { height: 31px; display: flex; align-items: center; gap: 14px; padding-left: 2px; background: #d6d6d6; border-bottom: 1px solid #999; }
.back-tools { height: 44px; display: flex; align-items: center; justify-content: flex-end; padding-right: 15px; }
.back-marks { height: 30px; padding: 7px 15px; text-align: right; font-size: 14px; }
.back-dev { height: 30px; display: flex; align-items: center; justify-content: flex-end; gap: 16px; padding-right: 14px; border-bottom: 1px solid #999; }
.back-page { flex: 1; display: flex; padding: 0 2px 2px 0; }
.back-content { flex: 1; display: flex; flex-direction: column; background: #f1f1f1; }
.dark { height: 55px; background: #303030; }
.foot { margin-top: auto; height: 59px; border-top: 1px solid #c4c4c4; }
.back-scroll { width: 14px; padding: 366px 1px 0; border-left: 1px solid #aaa; background: linear-gradient(90deg, #ccc, #eee); }
.back-scroll i { display: block; height: 168px; border: 1px solid #888; border-radius: 6px; background: linear-gradient(90deg, #eee, #ccc); }

.front { inset: 11px 49px 12px 50px; padding: 0 2px 2px; background: #d6d6d6; }
.title { height: 27px; margin: 0 -2px; display: flex; align-items: center; padding: 0 13px 1px 12px; background: linear-gradient(#ececec, #d6d6d6); color: #666; }
.title h1 { flex: 1; font-size: 13px; line-height: 16px; text-align: center; padding-right: 2px; }
.controls { display: flex; gap: 15px; }
.menubar { height: 23px; display: flex; align-items: center; gap: 17px; padding: 0 0 2px 9px; }
.tabs { height: 31px; display: flex; padding: 2px 0 0 14px; border-bottom: 1px solid #919191; }
.tab { flex: 0 1 210px; min-width: 0; height: 26px; margin-top: 2px; display: flex; align-items: center; gap: 6px; padding: 0 9px 0 10px; border-right: 1px solid #b0b0b0; }
.tab span { flex: 1; overflow: hidden; white-space: nowrap; mask-image: linear-gradient(90deg, #000 calc(100% - 20px), transparent); }
.tab button { color: #3c3c3c; }
.tab.last { border-right-color: transparent; }
.tab.active { height: 29px; margin-top: 0; padding-bottom: 1px; background: #dcdcdc; border: 1px solid #919ca6; border-bottom: 0; border-radius: 12px 12px 0 0; }
.newtab { margin: 0 0 0 13px; }
.toolbar { height: 42px; margin: 0 -2px; display: flex; align-items: center; padding: 0 16px 0 7px; background: #dcdcdc; }
.backbtn { width: 32px; height: 32px; justify-content: center; border: 1px solid #909090; border-radius: 50%; background: #e6e6e6; z-index: 1; }
.url { flex: 1; height: 24px; margin-left: -14px; display: flex; align-items: center; gap: 6px; padding: 0 10px 0 19px; border: 1px solid #909090; border-radius: 2px; background: #f8f8f8; }
.bar { width: 1px; height: 16px; background: #999; }
.address { flex: 1; color: #8a8a8a; white-space: nowrap; overflow: hidden; outline: 0; }
.address b { font-weight: 400; color: #222; }
.zoom { height: 16px; padding: 0 8px; border: 1px solid #c8c8c8; border-radius: 8px; background: #ebebeb; }
.reload { margin-left: 4px; }
.search { width: 252px; height: 24px; margin-left: 7px; display: flex; align-items: center; gap: 5px; padding: 0 4px; border: 1px solid #909090; border-radius: 2px; background: #f8f8f8; }
.search input { flex: 1; min-width: 0; padding: 0; border: 0; outline: 0; background: none; font: inherit; }
.search input::placeholder { color: #8a8a8a; opacity: 1; }
.tools { display: flex; padding-left: 3px; }
.tools button { width: 36px; height: 16px; justify-content: center; }
.tools .ruled { border-left: 1px solid #bbb; }
.tools .ruled:not(.slim) { width: 32px; margin-left: -2px; }
.tools .slim { width: 24px; margin: 0 0 0 -2px; }
.tools .dee { font: 900 18px/16px "Noto Sans", sans-serif; width: 38px; }
.menu { margin-left: auto; height: 38px; padding-left: 13px; border-left: 1px solid #c4c4c4; }
.bookmarks { height: 32px; margin: 0 -2px; display: grid; grid-template-columns: 157px 168px 108px 126px 78px 156px 156px 156px 156px 157px 154px 1fr auto; align-items: center; padding: 1px 15px 0 10px; background: #dcdcdc; }
.bookmarks a { display: flex; align-items: center; gap: 5px; }
.bookmarks .ruled { position: relative; }
.bookmarks .ruled::before { content: ""; position: absolute; left: -10px; height: 20px; border-left: 1px solid #333; }
.more { font-size: 14px; }
.devbar { height: 30px; margin: 0 -2px; display: grid; grid-template-columns: 108px 90px 70px 113px 89px 76px 82px 95px 91px 79px 77px 1fr auto; align-items: center; padding: 0 14px 0 14px; background: #dcdcdc; border-bottom: 1px solid #909090; }
.devbar .c { margin-left: 2px; }
.state { display: flex; gap: 16px; }

/* web page */
.viewport { flex: 1; min-height: 0; display: flex; background: #fff; }
.page { flex: 1; min-width: 0; display: flex; flex-direction: column; color: #5f6062; font-family: "Noto Sans CJK SC", "Noto Sans", sans-serif; }
.scroll { width: 15px; display: flex; padding: 2px 2px 18px 1px; border-left: 1px solid #aaa; background: linear-gradient(90deg, #ccc, #eee); }
.scroll i { flex: 1; border: 1px solid #888; border-radius: 6px; background: linear-gradient(90deg, #eee, #cfcfcf); }
.site-head { height: 135px; display: flex; align-items: center; padding: 0 150px 2px; }
.site-head svg { fill: currentColor; }
.mainnav { display: grid; grid-template-columns: 168px 137px 144px 148px 184px 205px auto; margin-left: 99px; padding-bottom: 6px; font-size: 19px; font-weight: 500; line-height: 24px; }
.mainnav a { display: flex; align-items: center; gap: 6px; }
.mainnav svg, .user svg { margin-top: 3px; }
.mainnav .on { color: #418cae; }
.user { margin-left: auto; padding-bottom: 6px; gap: 6px; font-size: 18px; line-height: 24px; }
.subnav { height: 45px; display: grid; grid-template-columns: 186px 174px 144px 116px 124px 127px 160px auto; align-items: center; justify-content: start; padding: 0 0 5px 270px; border-top: 7px solid #367693; background: #418cae; color: #d5e4ec; font-size: 16px; font-weight: 500; line-height: 20px; }
.subnav .on { position: relative; justify-self: start; color: #fff; }
.subnav .on::before { content: ""; position: absolute; left: 50%; top: -14px; margin-left: -7px; border: 7px solid transparent; border-top: 8px solid #fff; border-bottom: 0; filter: drop-shadow(0 4px 0 #367693); }
.rule { height: 6px; margin-top: 3px; background: #ff9a33; }
main { padding: 44px 150px 0; }
.heading { display: flex; align-items: center; gap: 14px; padding-bottom: 44px; border-bottom: 1px solid #ebebeb; }
.heading h2 { padding-bottom: 8px; color: #418cae; font-size: 41px; font-weight: 500; line-height: 40px; }
table { width: 1051px; margin-top: 64px; table-layout: fixed; border-collapse: collapse; font-size: 18px; line-height: 27px; }
.c1 { width: 157px; } .c2 { width: 267px; } .c3 { width: 175px; } .c4 { width: 153px; } .c5 { width: 83px; } .c6 { width: 153px; }
th, td { padding: 0; text-align: left; vertical-align: top; white-space: nowrap; }
th:first-child, td:first-child { padding-left: 27px; }
thead tr { background: #dfecf2; border-bottom: 1px solid #d6dee2; }
th { padding: 12px 0; color: #418cae; font-size: 21px; font-weight: 500; }
tbody tr { border-bottom: 1px solid #e0e2e4; }
tbody td { padding-top: 11px; padding-bottom: 36px; }
.print { margin-top: 5px; }
.site-foot { margin-top: auto; height: 99px; display: flex; align-items: center; justify-content: flex-end; gap: 22px; padding: 8px 150px 0; border-top: 1px solid #ebebeb; color: #adb0b4; font: 21px/30px "Open Sans", "Noto Sans", sans-serif; }
.site-foot span { white-space: nowrap; }
.cursor { position: absolute; left: 670px; top: 514px; }

/* panel */
.taskbar { height: 25px; display: flex; align-items: center; padding: 0 4px 0 8px; background: #d6d6d6; }
.start { width: 69px; gap: 7px; }
.launch { display: flex; gap: 2px; }
.launch svg { width: 22px; height: 22px; }
.grip { width: 3px; height: 8px; margin: 0 5px 0 4px; border: solid #aaa; border-width: 1px 0; }
.tasks { display: flex; gap: 2px; }
.tasks button { width: 111px; height: 22px; gap: 8px; padding: 0 7px; border: 1px solid #999; border-radius: 3px; background: linear-gradient(#efefef, #d8d8d8); white-space: nowrap; }
.tasks .on { background: #b5b5b5; border-color: #888; }
.tray { margin-left: auto; display: flex; align-items: center; gap: 7px; white-space: nowrap; }
.tray .grip { margin: 0; }
.tray b { color: #42539b; font-size: 13px; }
```
